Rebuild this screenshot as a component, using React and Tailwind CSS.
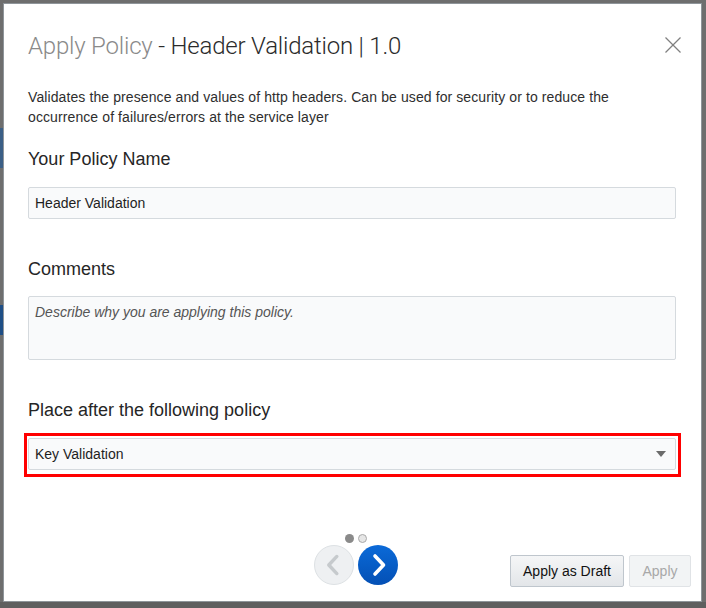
import React from "react";

function ChevronRight({ color, className }) {
  return (
    <svg width="40" height="40" viewBox="0 0 40 40" className={className}>
      <polyline points="17,11 25.5,20 17,29" fill="none" stroke={color} strokeWidth="3.6" strokeLinecap="round" strokeLinejoin="round" />
    </svg>
  );
}

function ChevronLeft({ color, className }) {
  return (
    <svg width="40" height="40" viewBox="0 0 40 40" className={className}>
      <polyline points="23,11 14.5,20 23,29" fill="none" stroke={color} strokeWidth="3.6" strokeLinecap="round" strokeLinejoin="round" />
    </svg>
  );
}

export default function App() {
  const sans = { fontFamily: '"Liberation Sans", Arial, Helvetica, sans-serif' };
  return (
    <div className="relative h-[608px] w-[706px] overflow-hidden bg-[#6e6e6e] p-[3px]" style={sans}>
      {/* hints of the page behind */}
      <div className="absolute left-0 top-[128px] h-[40px] w-[3px] bg-[#3b5f86]" />
      <div className="absolute left-0 top-[305px] h-[30px] w-[3px] bg-[#1f4f86]" />
      <div className="absolute bottom-0 left-0 h-[6px] w-full bg-[#5f5f5f]" />

      <div className="relative flex h-[599px] w-[699px] flex-col border border-[#8f959a] bg-white">
        {/* Header */}
        <div className="flex items-center justify-between pl-[24px] pr-[19px] pt-[28px]">
          <div className="text-[24px] leading-[28px] font-light tracking-[-0.2px]" style={{ fontFamily: 'Roboto, "Liberation Sans", sans-serif' }}>
            <span className="text-[#8a8a8a]">Apply Policy</span>
            <span className="text-[#2b2b2b]"> - Header Validation | 1.0</span>
          </div>
          <svg width="18" height="18" viewBox="0 0 18 18" className="mt-[-2px]">
            <line x1="1.5" y1="1.5" x2="16.5" y2="16.5" stroke="#808080" strokeWidth="1.3" />
            <line x1="16.5" y1="1.5" x2="1.5" y2="16.5" stroke="#808080" strokeWidth="1.3" />
          </svg>
        </div>

        {/* Body */}
        <div className="flex flex-col pl-[24px] pr-[25px]">
          <p className="mt-[27px] text-[14px] leading-[20px] tracking-[0.1px] text-[#2e2e2e]">
            Validates the presence and values of http headers. Can be used for security or to reduce the
            <br />
            occurrence of failures/errors at the service layer
          </p>

          <div className="mt-[20px] text-[18px] leading-[24px] text-[#262626]">Your Policy Name</div>
          <div className="mt-[16px] flex h-[32px] items-center rounded-[2px] border border-[#d5dade] bg-[#f9fafb] px-[6px] text-[14px] text-[#1e1e1e]">
            Header Validation
          </div>

          <div className="mt-[38px] text-[18px] leading-[24px] text-[#262626]">Comments</div>
          <div className="mt-[15px] h-[64px] rounded-[2px] border border-[#d5dade] bg-[#f9fafb] px-[6px] pt-[6px] text-[14px] italic leading-[18px] text-[#555555]">
            Describe why you are applying this policy.
          </div>

          <div className="mt-[38px] text-[18px] leading-[24px] text-[#262626]">Place after the following policy</div>
          <div className="relative mt-[16px]">
            <div className="flex h-[32px] items-center justify-between rounded-[2px] border border-[#d5dade] bg-[#f9fafb] pl-[6px] pr-[9px] text-[14px] text-[#1e1e1e]">
              <span>Key Validation</span>
              <svg width="10" height="6" viewBox="0 0 10 6">
                <polygon points="0,0 10,0 5,6" fill="#6b6b6b" />
              </svg>
            </div>
            <div className="pointer-events-none absolute -bottom-[7px] -left-[4px] -right-[5px] -top-[5px] border-[3px] border-[#ff0000]" />
          </div>
        </div>

        {/* Footer */}
        <div className="mt-auto grid grid-cols-[1fr_auto_1fr] items-end pb-[14px] pl-[17px] pr-[10px]">
          <div />
          <div className="flex flex-col items-center">
            <div className="flex items-center gap-[4px]">
              <span className="h-[9px] w-[9px] rounded-full bg-[#8a8a8a]" />
              <span className="h-[9px] w-[9px] rounded-full border border-[#a9a9a9] bg-[#e6e6e6]" />
            </div>
            <div className="mt-[4px] flex items-center gap-[4px] translate-y-[-2px]">
              <div className="flex h-[40px] w-[40px] items-center justify-center rounded-full border border-[#dde1e4] bg-[#eef0f2]">
                <ChevronLeft color="#c6cacd" />
              </div>
              <div className="flex h-[40px] w-[40px] items-center justify-center rounded-full bg-gradient-to-b from-[#0b6ad8] to-[#0450b5]">
                <ChevronRight color="#ffffff" />
              </div>
            </div>
          </div>
          <div className="flex justify-end gap-[5px]">
            <div className="flex h-[32px] w-[114px] items-center justify-center rounded-[2px] border border-[#bfc6cd] bg-gradient-to-b from-[#f5f6f7] to-[#e3e6e9] text-[14px] text-[#111111]">
              Apply as Draft
            </div>
            <div className="flex h-[32px] w-[62px] items-center justify-center rounded-[2px] border border-[#e0e3e6] bg-[#f2f4f5] text-[14px] text-[#a8a8a8]">
              Apply
            </div>
          </div>
        </div>
      </div>
    </div>
  );
}
